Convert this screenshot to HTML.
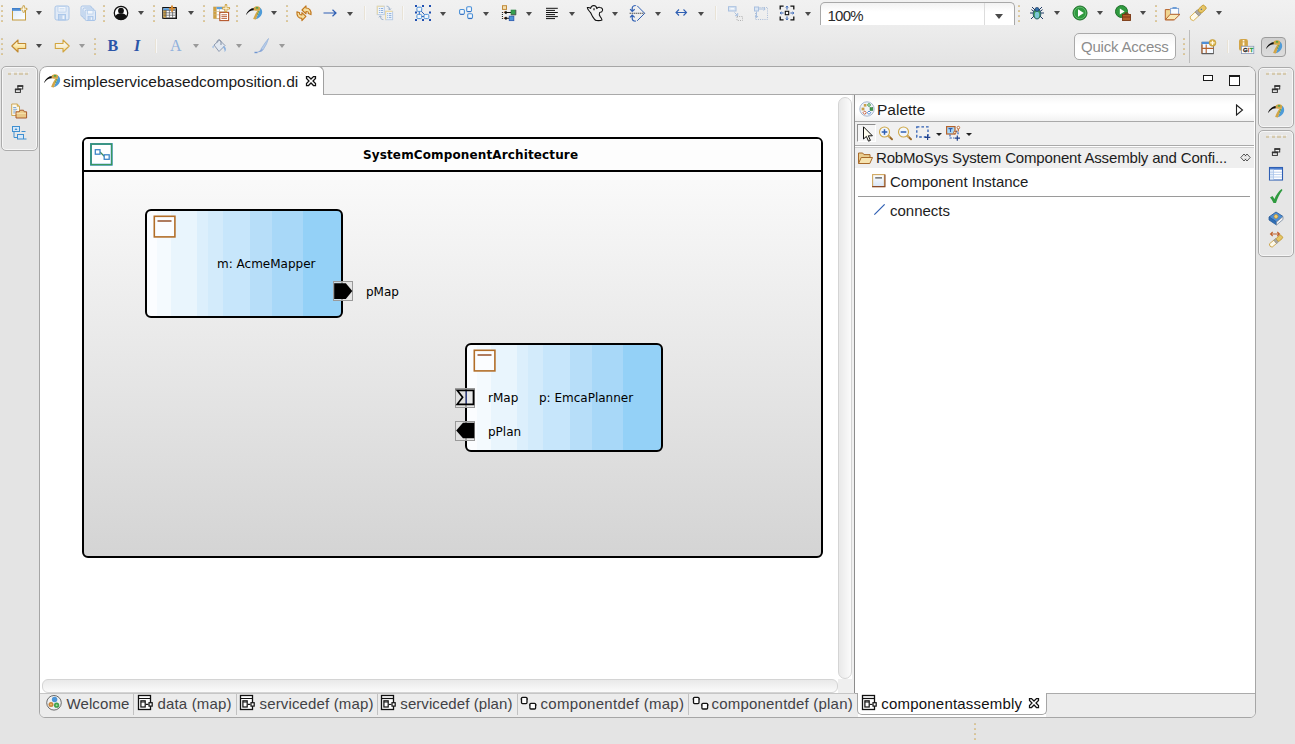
<!DOCTYPE html><html><head><meta charset="utf-8"><title>Papyrus</title><style>
*{box-sizing:border-box;margin:0;padding:0}
html,body{width:1295px;height:744px;overflow:hidden}
body{position:relative;background:#e4e4e4;font-family:"Liberation Sans",sans-serif;font-size:15px;color:#1c1c1c}
.abs{position:absolute}
.ic{position:absolute;overflow:visible}
#tb{position:absolute;left:0;top:0;width:1295px;height:64px;background:linear-gradient(#f1f1f1,#ececec 45%,#e4e4e4)}
.dd{position:absolute;width:0;height:0;border-left:3.5px solid transparent;border-right:3.5px solid transparent;border-top:4.5px solid #4a4a4a}
.hd{position:absolute;width:2px;height:17.5px;opacity:.75;background:repeating-linear-gradient(#bdbdbd 0,#dcbc74 1.2px,#dcbc74 2.1px,transparent 2.1px,transparent 5px)}
.sp{position:absolute;width:2px;border-left:1px solid #e9e3d6;border-right:1px solid #f7f7f7}
.t{position:absolute;white-space:nowrap;line-height:1}
.trim{position:absolute;background:#e6e6e6;border:1px solid #ababab;border-radius:5px;box-shadow:inset 0 0 0 1px #f6f6f6}
.dots{position:absolute;height:2px;width:21px;background:repeating-linear-gradient(90deg,#d2c4a2 0,#d2c4a2 3.2px,transparent 3.2px,transparent 5.7px);border-top:1px solid rgba(255,255,255,.6);box-sizing:content-box;opacity:.8}
</style></head><body>
<div id="tb">
<i class="hd" style="left:1px;top:4.5px"></i>
<svg class="ic" style="left:11px;top:5px" width="16" height="16" viewBox="0 0 16 16" ><defs><linearGradient id="gnw" x1="0" y1="0" x2="1" y2="1"><stop offset="0" stop-color="#dcecfb"/><stop offset="1" stop-color="#ffffff"/></linearGradient></defs><rect x="1.500" y="3.500" width="13" height="11.500" fill="url(#gnw)" stroke="#c49a3a" stroke-width="1"/><rect x="1" y="3" width="9" height="2.800" fill="#3f7fcb"/><rect x="1.500" y="4.600" width="8.500" height="1.200" fill="#6fa4dc"/><path d="M12.700 1.600v5M10.200 4.100h5" stroke="#c49a3a" stroke-width="2.500" stroke-linecap="round"/><path d="M12.700 1.900v4.400M10.500 4.100h4.400" stroke="#fffdf2" stroke-width="1.100" stroke-linecap="round"/></svg>
<i class="dd" style="left:35.5px;top:11px;border-top-color:#4a4a4a"></i>
<svg class="ic" style="left:54px;top:5px" width="16" height="16" viewBox="0 0 16 16" ><rect x="1" y="1" width="14" height="14" rx="1.800" fill="#e0eaf7" stroke="#a9c4e6" stroke-width="1"/><rect x="4" y="1.500" width="8" height="5.500" rx=".6" fill="#f3f7fc" stroke="#b4cdeb" stroke-width=".8"/><path d="M5.500 3.500h5M5.500 5h5" stroke="#c9dbf0" stroke-width=".8"/><rect x="4.500" y="9.500" width="7" height="5.500" fill="#c0d4ee" stroke="#a4c2e8" stroke-width=".8"/><rect x="8.500" y="10.500" width="1.800" height="3.500" fill="#eef4fb"/></svg>
<svg class="ic" style="left:80px;top:5px" width="16" height="16" viewBox="0 0 16 16" ><rect x="1" y="1" width="10.500" height="10.500" rx="1.500" fill="#e4edf8" stroke="#a9c4e6" stroke-width="1"/><rect x="3" y="3" width="10.500" height="10.500" rx="1.500" fill="#e4edf8" stroke="#a9c4e6" stroke-width="1"/><rect x="5" y="5" width="10.500" height="10.500" rx="1.500" fill="#e0eaf7" stroke="#a9c4e6" stroke-width="1"/><rect x="7.500" y="5.500" width="5.500" height="3.500" fill="#f3f7fc" stroke="#b4cdeb" stroke-width=".7"/><rect x="8" y="11.500" width="5" height="4" fill="#c0d4ee" stroke="#a4c2e8" stroke-width=".7"/><rect x="10.800" y="12.300" width="1.300" height="2.500" fill="#eef4fb"/></svg>
<i class="hd" style="left:103px;top:4.5px"></i>
<svg class="ic" style="left:113px;top:5px" width="16" height="16" viewBox="0 0 16 16" ><circle cx="8" cy="8" r="6.700" fill="#fff" stroke="#111" stroke-width="1.300"/><circle cx="8" cy="5.700" r="2.900" fill="#111"/><path d="M2.300 11.600 C3.200 8.800 5.500 8.200 8 8.200 S12.800 8.800 13.700 11.600 C12.300 13.900 10.200 14.800 8 14.800 S3.700 13.900 2.300 11.600Z" fill="#111"/></svg>
<i class="dd" style="left:137.5px;top:11px;border-top-color:#4a4a4a"></i>
<i class="hd" style="left:153px;top:4.5px"></i>
<svg class="ic" style="left:162px;top:5px" width="16" height="16" viewBox="0 0 16 16" ><rect x="1.500" y="3.500" width="13.500" height="10.500" fill="#111"/><rect x="0.800" y="2.600" width="13.300" height="10.600" fill="#fff" stroke="#111" stroke-width="1.200"/><rect x="1.400" y="3.200" width="12.100" height="2" fill="#5aa0e0"/><rect x="1.400" y="5.200" width="2.600" height="7.400" fill="#d0a040"/><path d="M1.400 5.400h12M1.400 7.800h12M1.400 10.200h12M4.200 5.200v7.400M7.400 5.200v7.400M10.600 5.200v7.400" stroke="#555" stroke-width=".7"/><path d="M10 0.400v6.400M6.900 3.600h6.200" stroke="#d88a30" stroke-width="1.900"/></svg>
<i class="dd" style="left:187.5px;top:11px;border-top-color:#4a4a4a"></i>
<i class="hd" style="left:203px;top:4.5px"></i>
<svg class="ic" style="left:213px;top:5px" width="16" height="16" viewBox="0 0 16 16" ><rect x="0.600" y="2" width="11" height="11.500" fill="#fff" stroke="#c8b07a" stroke-width=".8"/><rect x="0.600" y="2" width="3" height="11.500" fill="#d0a040"/><rect x="3.600" y="2" width="8" height="2.200" fill="#5aa0e0"/><path d="M0.600 6.500h11M0.600 9.800h7M6.500 4.200v4" stroke="#c8b890" stroke-width=".7"/><rect x="6.800" y="7.400" width="8.800" height="8.200" fill="#fff" stroke="#b5562b" stroke-width="1.100"/><path d="M8.400 9.800h5.600M8.400 11.600h5.600M8.400 13.400h5.600" stroke="#b5562b" stroke-width=".9"/><path d="M13 0.300v5.800M10.100 3.200h5.800" stroke="#cda040" stroke-width="2.600" stroke-linecap="round"/><path d="M13 0.700v5M10.500 3.200h5" stroke="#fff8dc" stroke-width="1.100" stroke-linecap="round"/></svg>
<i class="hd" style="left:236px;top:4.5px"></i>
<svg class="ic" style="left:246px;top:5px" width="16" height="16" viewBox="0 0 16 16" ><g transform="translate(0 .8)"><path d="M0 8.700 C1.500 5 4.500 2.600 7.900 2.300 L7.900 4.500 C5 4.500 2.500 5.900 0.300 9Z" fill="#0c0c0c"/><path d="M13.600 1.400 C15.800 2.600 16.700 5.400 15.900 8 C14.900 10.900 12.600 12.700 9.800 13.500 C11 10 13 7 13.600 4.400 C14.200 3.400 14.200 2.200 13.600 1.400Z" fill="#4f9bd8"/><path d="M7.700 2 C8.500 0.600 12 0 13.600 1.200 C14.500 2 14.300 3.600 13.500 4.800 L11 5 C9.500 5 8 4.700 7.700 4.500Z" fill="#d2a548"/><path d="M13.700 4.300 C13 7 11 10 9.900 13.600 L7.100 13.300 C8.200 10 9.800 7.300 11.500 4.700Z" fill="#d2a548"/><rect x="9.900" y="1.500" width="2.300" height="1.200" fill="#22a44a"/><rect x="12.200" y="5.600" width="1.100" height="1" fill="#22a44a"/><rect x="11.200" y="7.700" width="1.100" height="1" fill="#22a44a"/></g></svg>
<i class="dd" style="left:270.5px;top:11px;border-top-color:#4a4a4a"></i>
<i class="hd" style="left:286px;top:4.5px"></i>
<svg class="ic" style="left:296px;top:5px" width="16" height="16" viewBox="0 0 16 16" ><path d="M6 5 L10 0.8 L10 3 C13.2 3 15.400 5.200 15 9.600 L12.300 8.600 C12.700 7 12 6.500 10 6.500 L10 8.800 Z" fill="#f6dfa0" stroke="#c0761c" stroke-width="1.1" stroke-linejoin="round"/><path d="M6 5 L10 0.8 L10 3 C13.2 3 15.400 5.200 15 9.600 L12.300 8.600 C12.700 7 12 6.500 10 6.500 L10 8.800 Z" transform="rotate(180 7.95 8.2)" fill="#f6dfa0" stroke="#c0761c" stroke-width="1.1" stroke-linejoin="round"/></svg>
<svg class="ic" style="left:322px;top:5px" width="16" height="16" viewBox="0 0 16 16" ><path d="M1.5 8h12.5M10.5 4.8 L14 8 L10.5 11.2" fill="none" stroke="#2f5fb3" stroke-width="1.2"/></svg>
<i class="dd" style="left:346.5px;top:12px;border-top-color:#4a4a4a"></i>
<i class="sp" style="left:364px;top:6px;height:14px"></i>
<svg class="ic" style="left:377px;top:5px" width="16" height="16" viewBox="0 0 16 16" ><rect x="0.3" y="1.3" width="7" height="8.300" fill="#f0f5fb" stroke="#b9cde6" stroke-width="1"/><path d="M0.3 9.600000000000001V1.3h7" fill="none" stroke="#ead9a8" stroke-width="1.100"/><path d="M1.9000000000000001 3.5h1M3.6999999999999997 3.5h2.400M1.9000000000000001 5.5h1M3.6999999999999997 5.5h2.400M1.9000000000000001 7.5h1M3.6999999999999997 7.5h2.400" stroke="#8fb0dc" stroke-width="1"/><rect x="8.6" y="6.4" width="7" height="8.300" fill="#f0f5fb" stroke="#b9cde6" stroke-width="1"/><path d="M8.6 14.700000000000001V6.4h7" fill="none" stroke="#ead9a8" stroke-width="1.100"/><path d="M10.2 8.600000000000001h1M12.0 8.600000000000001h2.400M10.2 10.600000000000001h1M12.0 10.600000000000001h2.400M10.2 12.600000000000001h1M12.0 12.600000000000001h2.400" stroke="#8fb0dc" stroke-width="1"/><path d="M9.500 1.200 C11.500 1.200 12.600 2.400 12.600 4.600 M11.200 3.500 L12.600 5 L14 3.500 M6.400 14.600 C4.400 14.600 3.300 13.400 3.300 11.200 M1.900 12.300 L3.300 10.800 L4.700 12.300" fill="none" stroke="#9ab0cc" stroke-width="1"/></svg>
<i class="sp" style="left:402px;top:6px;height:14px"></i>
<svg class="ic" style="left:415px;top:5px" width="16" height="16" viewBox="0 0 16 16" ><rect x="0" y="0" width="2" height="2" fill="#1f4fb0"/><rect x="7" y="0" width="2" height="2" fill="#1f4fb0"/><rect x="14" y="0" width="2" height="2" fill="#1f4fb0"/><rect x="0" y="6.5" width="2" height="2" fill="#1f4fb0"/><rect x="14" y="6.5" width="2" height="2" fill="#1f4fb0"/><rect x="0" y="14" width="2" height="2" fill="#1f4fb0"/><rect x="7" y="14" width="2" height="2" fill="#1f4fb0"/><rect x="14" y="14" width="2" height="2" fill="#1f4fb0"/><path d="M4.300 4.200 V11.500 H11.400 M4.300 4.200 L11.400 11.500" fill="none" stroke="#2f5fb3" stroke-width="1"/><rect x="1.900" y="2.200" width="4.800" height="4.200" rx="1.200" fill="#f2f6fb" stroke="#4a90d8" stroke-width="1"/><rect x="1.900" y="9.400" width="4.800" height="4.200" rx="1.200" fill="#f2f6fb" stroke="#4a90d8" stroke-width="1"/><rect x="9" y="9.400" width="4.800" height="4.200" rx="1.200" fill="#f2f6fb" stroke="#4a90d8" stroke-width="1"/></svg>
<i class="dd" style="left:439.5px;top:12px;border-top-color:#4a4a4a"></i>
<svg class="ic" style="left:458px;top:5px" width="16" height="16" viewBox="0 0 16 16" ><rect x="1.6" y="4.5" width="4.800" height="4.700" rx="1.100" fill="#f4f7fb" stroke="#4a90d8" stroke-width="1.100"/><path d="M2.2 9.4h3.600" stroke="#2f5fb3" stroke-width=".8"/><rect x="8.7" y="1.8" width="4.800" height="4.700" rx="1.100" fill="#f4f7fb" stroke="#4a90d8" stroke-width="1.100"/><path d="M9.299999999999999 6.7h3.600" stroke="#2f5fb3" stroke-width=".8"/><rect x="9.7" y="8.7" width="4.800" height="4.700" rx="1.100" fill="#f4f7fb" stroke="#4a90d8" stroke-width="1.100"/><path d="M10.299999999999999 13.6h3.600" stroke="#2f5fb3" stroke-width=".8"/></svg>
<i class="dd" style="left:482.5px;top:12px;border-top-color:#4a4a4a"></i>
<svg class="ic" style="left:501px;top:5px" width="16" height="16" viewBox="0 0 16 16" ><rect x="1.500" y="0.700" width="4" height="3.700" fill="#f5e0b0" stroke="#c08a3a" stroke-width="1"/><path d="M1.400 7v7" stroke="#111" stroke-width="1" stroke-dasharray="1 1"/><path d="M4 7.500h6M4 13.300h4.500" stroke="#111" stroke-width="1.100"/><path d="M2.800 7.500l2.300-1.700 1.200 1.700-1.200 1.700zM2.800 13.300l2.300-1.700 1.200 1.700-1.200 1.700z" fill="#111"/><path d="M2.600 7.500l1.500-1.100M2.600 13.300l1.500-1.100" stroke="#d07030" stroke-width=".8"/><rect x="10" y="5" width="4.800" height="4.800" fill="#35a050" stroke="#2a8040" stroke-width=".6"/><path d="M14.800 5v4.800h-4.800" fill="none" stroke="#555" stroke-width=".8"/><rect x="8.300" y="11.200" width="4.500" height="4.400" fill="#4d96d8" stroke="#2f5fb3" stroke-width=".9"/></svg>
<i class="dd" style="left:525.5px;top:12px;border-top-color:#4a4a4a"></i>
<svg class="ic" style="left:544px;top:5px" width="16" height="16" viewBox="0 0 16 16" ><path d="M2 3.300h11.800M2 5.400h9M2 7.500h11.800M2 9.600h9M2 11.600h11.800M2 13.600h9" stroke="#111" stroke-width="1"/></svg>
<i class="dd" style="left:568.5px;top:12px;border-top-color:#4a4a4a"></i>
<svg class="ic" style="left:587px;top:5px" width="16" height="16" viewBox="0 0 16 16" ><path d="M0.300 2.600 C1.500 2.200 2.800 2.700 3.600 3.400 C3.800 2 4.600 0.500 6.800 0.400 C8.600 0.400 9.600 1.800 9.800 3.600 C10.600 2.600 11.800 2.200 13 2.400 C14.600 2.600 15.800 3.600 15.600 5.200 C15.400 6.600 14 7.400 12.600 7.600 C12 9 12.200 10.400 13.200 11.600 C14.200 12.800 15 13.800 15 15 C13.500 15.700 11.500 15.700 9.500 15.500 C8.600 15.400 8 15 7.600 14.400 C6.600 13 5.600 11.600 5 10.400 C4.400 9.200 4 8.200 3.200 7.200 C2.200 6 0.400 4.400 0.300 2.600Z" fill="#f0f0f0" stroke="#111" stroke-width="1.050" stroke-linejoin="round"/><path d="M7 3.200v2" stroke="#111" stroke-width="1.200"/></svg>
<i class="dd" style="left:611.5px;top:12px;border-top-color:#4a4a4a"></i>
<svg class="ic" style="left:629px;top:5px" width="16" height="16" viewBox="0 0 16 16" ><path d="M8.200 0.800 L15.700 8.300 L8.200 15.800" fill="none" stroke="#2f5fb3" stroke-width="1"/><path d="M0.700 8.300h14.500" stroke="#111" stroke-width="1.100" stroke-dasharray="1 1"/><path d="M6.800 0.500 C4.600 0.500 3.200 1.600 3.200 3.400 V6.200 M1.100 4.200 L3.200 6.400 L5.700 4.200 M6.800 16.100 C4.600 16.100 3.200 15 3.200 13.200 V10.400 M1.100 12.400 L3.200 10.200 L5.700 12.400" fill="none" stroke="#2f5fb3" stroke-width="1.200"/></svg>
<i class="dd" style="left:654.5px;top:12px;border-top-color:#4a4a4a"></i>
<svg class="ic" style="left:673px;top:5px" width="16" height="16" viewBox="0 0 16 16" ><path d="M3 7.500h10.500M6 4.500 L3 7.500 L6 10.500M10.500 4.500 L13.500 7.500 L10.500 10.500" fill="none" stroke="#2f5fb3" stroke-width="1.100"/></svg>
<i class="dd" style="left:697.5px;top:12px;border-top-color:#4a4a4a"></i>
<i class="sp" style="left:715px;top:6px;height:14px"></i>
<svg class="ic" style="left:727px;top:5px" width="16" height="16" viewBox="0 0 16 16" ><rect x="1.500" y="1.700" width="7.500" height="4.300" fill="#dbe6f4" stroke="#a9c0df"/><path d="M3.500 3.800h3.500" stroke="#fff" stroke-width="1"/><path d="M7.500 7.500 L10.500 10.500 M10.700 8V10.700H8" fill="none" stroke="#a9c0df" stroke-width="1"/><rect x="10" y="11.500" width="5.500" height="4" fill="none" stroke="#b0b0b0" stroke-width="1" stroke-dasharray="1 1.200"/></svg>
<svg class="ic" style="left:753px;top:5px" width="16" height="16" viewBox="0 0 16 16" ><path d="M6.500 2.500H14.500V14.500H2.500V7" fill="none" stroke="#a9bcd8" stroke-width="1" stroke-dasharray="1 1.200"/><rect x="1.500" y="2" width="4" height="4" fill="#dbe6f4" stroke="#a9c0df"/><path d="M6 4h6M10.500 2.500 L12.200 4 L10.500 5.500M3.500 6.500v6M2 11 L3.500 12.700 L5 11" fill="none" stroke="#a9c0df" stroke-width="1"/></svg>
<svg class="ic" style="left:779px;top:5px" width="16" height="16" viewBox="0 0 16 16" ><path d="M1.200 4.600V1.200h3.400M11.400 1.200H14.800v3.400M14.800 11.400V14.800h-3.400M4.600 14.800H1.200v-3.400" fill="none" stroke="#111" stroke-width="1.300"/><rect x="6.300" y="6.300" width="3.400" height="3.400" fill="#fff" stroke="#111" stroke-width="1.100"/><path d="M8 1.200v3.400M6.900 2.400 L8 1.200 L9.100 2.400M8 14.800v-3.400M6.900 13.600 L8 14.800 L9.100 13.600M1.200 8h3.400M2.400 6.900 L1.200 8 L2.400 9.100M14.800 8h-3.400M13.600 6.900 L14.800 8 L13.600 9.100" fill="none" stroke="#2f5fb3" stroke-width="1"/></svg>
<i class="dd" style="left:804.5px;top:12px;border-top-color:#4a4a4a"></i>
<i class="hd" style="left:1018px;top:4.5px"></i>
<svg class="ic" style="left:1029px;top:5px" width="16" height="16" viewBox="0 0 16 16" ><path d="M3 2 L6 5 M13 2 L10 5 M1 8 H4 M12 8 h3 M2 14 L5 11 M14 14 L11 11 M2.400 4.600 L5 6.500 M13.600 4.600 L11 6.500" stroke="#1f3b66" stroke-width="1"/><ellipse cx="8" cy="9" rx="3.800" ry="5" fill="#3f9a5a" stroke="#1f4f66" stroke-width=".9"/><ellipse cx="8" cy="10" rx="2.200" ry="3.200" fill="#7cc7d8"/><circle cx="8" cy="4.400" r="2" fill="#2f6fa8" stroke="#1f3b66" stroke-width=".7"/></svg>
<i class="dd" style="left:1053.5px;top:11px;border-top-color:#4a4a4a"></i>
<svg class="ic" style="left:1072px;top:5px" width="16" height="16" viewBox="0 0 16 16" ><circle cx="8" cy="8" r="7" fill="#2f9a3f" stroke="#1f6f2a" stroke-width="1"/><circle cx="8" cy="8" r="5.800" fill="none" stroke="#7fd08a" stroke-width=".8" opacity=".7"/><path d="M6 4.200 L11.800 8 L6 11.800Z" fill="#fff"/></svg>
<i class="dd" style="left:1096.5px;top:11px;border-top-color:#4a4a4a"></i>
<svg class="ic" style="left:1115px;top:5px" width="16" height="16" viewBox="0 0 16 16" ><circle cx="6.500" cy="6.500" r="6" fill="#2f9a3f" stroke="#1f6f2a" stroke-width="1"/><path d="M4.800 3.400 L9.600 6.500 L4.800 9.600Z" fill="#fff"/><rect x="7.500" y="9.500" width="8" height="6" fill="#b0602c" stroke="#7a3a14" stroke-width=".9"/><path d="M10 9.500v-1.500h3v1.500" fill="none" stroke="#7a2a12" stroke-width="1"/><path d="M7.500 12h8" stroke="#7a2a12" stroke-width=".8"/></svg>
<i class="dd" style="left:1139.5px;top:11px;border-top-color:#4a4a4a"></i>
<i class="hd" style="left:1155px;top:4.5px"></i>
<svg class="ic" style="left:1164px;top:5px" width="16" height="16" viewBox="0 0 16 16" ><path d="M1.300 4.600 h4.400 l1 1.200 h7.300 v3.400 L9.800 14.800 H1.300Z" fill="#f0d590" stroke="#b5622b" stroke-width="1" stroke-linejoin="round"/><rect x="6.600" y="3.400" width="8" height="6.400" fill="#f8fbff" stroke="#7f9fd0" stroke-width=".9"/><rect x="8.300" y="2" width="4.600" height="2" rx=".8" fill="#6f9fd8"/><path d="M1.300 14.800 L6.200 9.300 H16 L10.400 14.800Z" fill="#f8e8b8" stroke="#b5622b" stroke-width="1" stroke-linejoin="round"/></svg>
<svg class="ic" style="left:1190px;top:5px" width="16" height="16" viewBox="0 0 16 16" ><g transform="rotate(-43 7.500 8.300)"><path d="M-0.400 5.800 H7 V11 H-0.400 L-1.600 8.400Z" fill="#fdf9ea" stroke="#d8b050" stroke-width=".9" stroke-linejoin="round"/><rect x="6.600" y="5.700" width="3.200" height="5.400" fill="#aaa6a0" stroke="#8a8680" stroke-width=".7"/><rect x="9.800" y="5.900" width="8" height="5" rx="1.600" fill="#e6c566" stroke="#c09830" stroke-width=".9"/><rect x="12.500" y="7.400" width="1.200" height="1.200" fill="#2f5fb3"/></g></svg>
<i class="dd" style="left:1215.5px;top:11px;border-top-color:#4a4a4a"></i>
<div class="abs" style="left:820px;top:2px;width:195px;height:23px;border:1px solid #a8a8a8;border-bottom:none;border-radius:5px 5px 0 0;background:linear-gradient(#f2f2f2,#ffffff 40%);"></div>
<i class="abs" style="left:984px;top:3px;width:1px;height:22px;background:#dcdcdc"></i>
<span class="t" style="left:827.500px;top:8px;font-size:15px;letter-spacing:-.75px;color:#2a2a2a">100%</span>
<i class="dd" style="left:994.5px;top:14px;border-left-width:4px;border-right-width:4px;border-top-width:5px"></i>
<i class="hd" style="left:1px;top:37.5px"></i>
<svg class="ic" style="left:11px;top:38px" width="16" height="16" viewBox="0 0 16 16" ><defs><linearGradient id="gbk" x1="0" y1="0" x2="0" y2="1"><stop offset="0" stop-color="#fffbe6"/><stop offset=".5" stop-color="#fbeab0"/><stop offset="1" stop-color="#efc45a"/></linearGradient></defs><path d="M0.800 8 L7 2 V5.500 H14.700 V10.500 H7 V14Z" fill="url(#gbk)" stroke="#c28a30" stroke-width="1.100" stroke-linejoin="round"/></svg>
<i class="dd" style="left:35.5px;top:44px;border-top-color:#4a4a4a"></i>
<svg class="ic" style="left:54px;top:38px" width="16" height="16" viewBox="0 0 16 16" ><defs><linearGradient id="gfw" x1="0" y1="0" x2="0" y2="1"><stop offset="0" stop-color="#fffdf0"/><stop offset=".5" stop-color="#f6f0dc"/><stop offset="1" stop-color="#f3d98a"/></linearGradient></defs><path d="M15.200 8 L9 2 V5.500 H1.300 V10.500 H9 V14Z" fill="url(#gfw)" stroke="#d2a640" stroke-width="1.100" stroke-linejoin="round"/></svg>
<i class="dd" style="left:78.5px;top:44px;border-top-color:#9a9a9a"></i>
<i class="hd" style="left:94px;top:37.5px"></i>
<i class="sp" style="left:155px;top:39px;height:14px"></i>
<i class="dd" style="left:192.5px;top:44px;border-top-color:#9a9a9a"></i>
<svg class="ic" style="left:211px;top:38px" width="16" height="16" viewBox="0 0 16 16" ><path d="M3 7 L8.500 2 L14 7.500 L8 13.500Z" fill="#e2e8f0" stroke="#8f9bb0" stroke-width="1" stroke-linejoin="round"/><path d="M6 4.500 C6 1 10 1 10 4.500 V7" fill="none" stroke="#808da2" stroke-width="1"/><path d="M3 7 L1 9 L2.500 10.500 Z" fill="#9cbbe4"/><path d="M12.500 8 C15.500 9 15.500 13 13.500 14 C14 12 13 10.500 12 9.500Z" fill="#8ab0e0"/></svg>
<i class="dd" style="left:235.5px;top:44px;border-top-color:#9a9a9a"></i>
<svg class="ic" style="left:254px;top:38px" width="16" height="16" viewBox="0 0 16 16" ><path d="M14.500 0.500 L11 5 L7 11 L9 12 L12.500 6Z" fill="#b8cdea" stroke="#94b0d8" stroke-width=".7"/><path d="M7 11 C6 12.500 5 13.500 3 14 C5 14.500 8 14 9 12Z" fill="#8aa8d8"/><path d="M0.500 14.500h3" stroke="#6f95d0" stroke-width="1.400"/></svg>
<i class="dd" style="left:278.5px;top:44px;border-top-color:#9a9a9a"></i>
<span class="t" style="left:107.500px;top:37.800px;font-family:'Liberation Serif',serif;font-weight:bold;font-size:16px;color:#2b56a8">B</span>
<span class="t" style="left:134px;top:37.800px;font-family:'Liberation Serif',serif;font-weight:bold;font-style:italic;font-size:16px;color:#2b56a8">I</span>
<span class="t" style="left:170px;top:37.800px;font-family:'Liberation Serif',serif;font-size:16px;color:#8fb0dc">A</span>
<div class="abs" style="left:1074px;top:33px;width:102px;height:27px;border:1px solid #a9a9a9;border-radius:5px;background:linear-gradient(#f4f4f4,#ffffff 50%)"></div>
<span class="t" style="left:1081px;top:39px;font-size:15px;color:#8c8c8c;letter-spacing:-0.2px">Quick Access</span>
<i class="hd" style="left:1183px;top:37.5px"></i>
<i class="abs" style="left:1189px;top:30px;width:1px;height:33px;background:#bdbdbd"></i>
<svg class="ic" style="left:1200.5px;top:39px" width="16" height="16" viewBox="0 0 16 16" ><rect x="0.900" y="3.300" width="11.600" height="11.300" fill="#f4f9ff" stroke="#6a6a6a" stroke-width=".9"/><rect x="0.900" y="2.800" width="11.600" height="2.200" fill="#4f8fd8"/><path d="M1 5.500V14.500M5.200 5.500v9M1.400 9.400h11" stroke="#b5622b" stroke-width="1.100"/><path d="M0.900 14.700h11.600" stroke="#555" stroke-width="1"/><circle cx="11.500" cy="3.900" r="3.400" fill="#d8b048" stroke="#c09830" stroke-width=".6"/><path d="M11.500 1.700v4.400M9.300 3.900h4.400" stroke="#fffbe8" stroke-width="1.300"/></svg>
<i class="sp" style="left:1227px;top:40px;height:13px"></i>
<svg class="ic" style="left:1238px;top:38px" width="17" height="17" viewBox="0 0 17 17"><rect x="1" y="0.900" width="8.900" height="11.900" rx="2.200" fill="#d2a548"/><rect x="4.700" y="2" width="1.700" height="1.500" fill="#fff8e8"/><rect x="4.700" y="4.300" width="1.700" height="3.200" fill="#fff8e8"/><rect x="3.400" y="8.300" width="12.400" height="7.300" fill="#fff" stroke="#8a9ab8" stroke-width=".8"/><text x="4.900" y="14" font-family="Liberation Sans,sans-serif" font-weight="bold" font-size="5.800" letter-spacing=".3" stroke-width=".3"><tspan fill="#222" stroke="#222">G</tspan><tspan fill="#c0502a" stroke="#c0502a">I</tspan><tspan fill="#2f9a3f" stroke="#2f9a3f">T</tspan></text></svg>
<div class="abs" style="left:1261px;top:37px;width:25px;height:20px;border:1px solid #9c9c9c;border-radius:4px;background:linear-gradient(#cfcfcf,#dddddd)"></div>
<svg class="ic" style="left:1265.5px;top:39px" width="16" height="16" viewBox="0 0 16 16" ><g transform="translate(0 .8)"><path d="M0 8.700 C1.500 5 4.500 2.600 7.900 2.300 L7.900 4.500 C5 4.500 2.500 5.900 0.300 9Z" fill="#0c0c0c"/><path d="M13.600 1.400 C15.800 2.600 16.700 5.400 15.900 8 C14.900 10.900 12.600 12.700 9.800 13.500 C11 10 13 7 13.600 4.400 C14.200 3.400 14.200 2.200 13.600 1.400Z" fill="#4f9bd8"/><path d="M7.700 2 C8.500 0.600 12 0 13.600 1.200 C14.500 2 14.300 3.600 13.500 4.800 L11 5 C9.500 5 8 4.700 7.700 4.500Z" fill="#d2a548"/><path d="M13.700 4.300 C13 7 11 10 9.900 13.600 L7.100 13.300 C8.200 10 9.800 7.300 11.500 4.700Z" fill="#d2a548"/><rect x="9.900" y="1.500" width="2.300" height="1.200" fill="#22a44a"/><rect x="12.200" y="5.600" width="1.100" height="1" fill="#22a44a"/><rect x="11.200" y="7.700" width="1.100" height="1" fill="#22a44a"/></g></svg>
</div>
<div class="trim" style="left:1px;top:66px;width:37px;height:84.500px;border-radius:5px"></div>
<i class="dots" style="left:8px;top:71.500px"></i>
<svg class="ic" style="left:10.5px;top:81px" width="16" height="16" viewBox="0 0 16 16" ><rect x="6.900" y="4.800" width="4.800" height="3.200" fill="#f4f4f4" stroke="#333" stroke-width="1"/><path d="M6.400 5.100h5.800" stroke="#333" stroke-width="1.600"/><rect x="4.400" y="8.200" width="5" height="3.200" fill="#f4f4f4" stroke="#333" stroke-width="1"/><path d="M3.900 8.500h6" stroke="#333" stroke-width="1.600"/></svg>
<svg class="ic" style="left:10.5px;top:102.5px" width="16" height="16" viewBox="0 0 16 16" ><path d="M0.700 1h5.500l2.300 2.300v9.200h-7.800z" fill="#fdf8e8" stroke="#c9a04a" stroke-width=".9"/><path d="M6.200 1v2.300h2.300" fill="#e8c060" stroke="#c9a04a" stroke-width=".7"/><path d="M2.200 4.500h3M2.200 6.300h4M2.200 8.100h3M2.200 9.900h2" stroke="#6f9fd8" stroke-width=".9"/><path d="M5 8.800h3.200l1-1.600h3.300l.8 1.600h2.300v6.200h-10.600z" fill="#e9c888" stroke="#a85a2a" stroke-width="1" stroke-linejoin="round"/><path d="M5.600 10.300h9.400" stroke="#f8e4b0" stroke-width="1"/></svg>
<svg class="ic" style="left:11px;top:125px" width="16" height="16" viewBox="0 0 16 16" ><rect x="1.500" y="1.500" width="7" height="5" fill="#d7e8f8" stroke="#3f8fd0" stroke-width="1"/><path d="M3.500 5 L5 3 L6.500 5Z" fill="#3f8fd0"/><path d="M3 6.500v6h3" fill="none" stroke="#3f8fd0" stroke-width="1"/><rect x="6.500" y="9.500" width="6" height="4.500" fill="#d7e8f8" stroke="#3f8fd0" stroke-width="1"/><path d="M10.500 6.500h4M13 14h2.500" stroke="#3f8fd0" stroke-width="1.200"/></svg>
<div class="trim" style="left:1258px;top:67px;width:36px;height:61px;border-radius:5px"></div>
<div class="trim" style="left:1258px;top:130px;width:36px;height:127px;border-radius:5px"></div>
<i class="dots" style="left:1266px;top:72px"></i>
<svg class="ic" style="left:1268px;top:81px" width="16" height="16" viewBox="0 0 16 16" ><rect x="6.900" y="4.800" width="4.800" height="3.200" fill="#f4f4f4" stroke="#333" stroke-width="1"/><path d="M6.400 5.100h5.800" stroke="#333" stroke-width="1.600"/><rect x="4.400" y="8.200" width="5" height="3.200" fill="#f4f4f4" stroke="#333" stroke-width="1"/><path d="M3.900 8.500h6" stroke="#333" stroke-width="1.600"/></svg>
<svg class="ic" style="left:1268px;top:102.5px" width="16" height="16" viewBox="0 0 16 16" ><g transform="translate(0 .8)"><path d="M0 8.700 C1.500 5 4.500 2.600 7.900 2.300 L7.900 4.500 C5 4.500 2.500 5.900 0.300 9Z" fill="#0c0c0c"/><path d="M13.600 1.400 C15.800 2.600 16.700 5.400 15.900 8 C14.900 10.900 12.600 12.700 9.800 13.500 C11 10 13 7 13.600 4.400 C14.200 3.400 14.200 2.200 13.600 1.400Z" fill="#4f9bd8"/><path d="M7.700 2 C8.500 0.600 12 0 13.600 1.200 C14.500 2 14.300 3.600 13.500 4.800 L11 5 C9.500 5 8 4.700 7.700 4.500Z" fill="#d2a548"/><path d="M13.700 4.300 C13 7 11 10 9.900 13.600 L7.100 13.300 C8.200 10 9.800 7.300 11.500 4.700Z" fill="#d2a548"/><rect x="9.900" y="1.500" width="2.300" height="1.200" fill="#22a44a"/><rect x="12.200" y="5.600" width="1.100" height="1" fill="#22a44a"/><rect x="11.200" y="7.700" width="1.100" height="1" fill="#22a44a"/></g></svg>
<i class="dots" style="left:1266px;top:135px"></i>
<svg class="ic" style="left:1268px;top:144px" width="16" height="16" viewBox="0 0 16 16" ><rect x="6.900" y="4.800" width="4.800" height="3.200" fill="#f4f4f4" stroke="#333" stroke-width="1"/><path d="M6.400 5.100h5.800" stroke="#333" stroke-width="1.600"/><rect x="4.400" y="8.200" width="5" height="3.200" fill="#f4f4f4" stroke="#333" stroke-width="1"/><path d="M3.900 8.500h6" stroke="#333" stroke-width="1.600"/></svg>
<svg class="ic" style="left:1268px;top:165.5px" width="16" height="16" viewBox="0 0 16 16" ><rect x="1.500" y="1.500" width="13" height="12.500" fill="#fff" stroke="#2f5fb3" stroke-width="1.100"/><rect x="2" y="2" width="12" height="1.700" fill="#4d7fd0"/><rect x="2" y="3.700" width="3.400" height="9.800" fill="#e4eefa"/><path d="M2 6.200h12M2 8.600h12M2 11h12" stroke="#a9c4ea" stroke-width=".8"/><path d="M5.500 3.700v9.800" stroke="#a9c4ea" stroke-width=".8"/></svg>
<svg class="ic" style="left:1268px;top:187.5px" width="16" height="16" viewBox="0 0 16 16" ><path d="M2 9.500 L4.500 8 L6.500 11 C8 7 10.500 3.500 13.500 1 L14.500 2 C11.500 6 9.500 10 8 15 L5.500 15 C4.500 13 3.500 11 2 9.500Z" fill="#2f9a3f"/></svg>
<svg class="ic" style="left:1268px;top:210px" width="16" height="16" viewBox="0 0 16 16" ><path d="M1 7 L8 2 L15 6.500 L8.500 12Z" fill="#4d8fd6" stroke="#2f5f9a" stroke-width=".9" stroke-linejoin="round"/><path d="M1 7 V10 L8.500 15 V12Z" fill="#2f6fb8" stroke="#2f5f9a" stroke-width=".8" stroke-linejoin="round"/><path d="M8.500 12 L15 6.500 V9.500 L8.500 15Z" fill="#f4f4f4" stroke="#7a8aa0" stroke-width=".8" stroke-linejoin="round"/><circle cx="8" cy="6.500" r="2" fill="#f0d070" stroke="#b98a3a" stroke-width=".7"/></svg>
<svg class="ic" style="left:1268px;top:231px" width="16" height="16" viewBox="0 0 16 16" ><g transform="translate(1.500 3.500) scale(.82) rotate(-40 7.500 8.300)"><path d="M-0.400 5.800 H7 V11 H-0.400 L-1.600 8.400Z" fill="#fdf9ea" stroke="#c9a040" stroke-width="1" stroke-linejoin="round"/><rect x="6.600" y="5.700" width="3.200" height="5.400" fill="#aaa6a0" stroke="#8a8680" stroke-width=".7"/><rect x="9.800" y="5.900" width="7.500" height="5" rx="1.600" fill="#e6c566" stroke="#c09830" stroke-width="1"/></g><path d="M2.500 3h9M4.700 1 L2.500 3 L4.700 5M9.300 1 L11.500 3 L9.300 5" fill="none" stroke="#c0602a" stroke-width="1.100"/></svg>
<div class="abs" style="left:39px;top:66px;width:1217px;height:652px;border:1px solid #a6a6a6;border-radius:8px 8px 6px 6px;background:#fff;overflow:hidden">
<div class="abs" style="left:0;top:0;width:1215px;height:28px;background:#efefef;border-bottom:1px solid #a9a9a9"></div>
<div class="abs" style="left:-1px;top:-1px;width:285px;height:29px;background:#fff;border:1px solid #a0a0a0;border-bottom:none;border-radius:8px 6px 0 0"></div>
<svg class="ic" style="left:4px;top:6px" width="16" height="16" viewBox="0 0 16 16" ><g transform="translate(0 .8)"><path d="M0 8.700 C1.500 5 4.500 2.600 7.900 2.300 L7.900 4.500 C5 4.500 2.500 5.900 0.300 9Z" fill="#0c0c0c"/><path d="M13.600 1.400 C15.800 2.600 16.700 5.400 15.900 8 C14.900 10.900 12.600 12.700 9.800 13.500 C11 10 13 7 13.600 4.400 C14.200 3.400 14.200 2.200 13.600 1.400Z" fill="#4f9bd8"/><path d="M7.700 2 C8.500 0.600 12 0 13.600 1.200 C14.500 2 14.300 3.600 13.500 4.800 L11 5 C9.500 5 8 4.700 7.700 4.500Z" fill="#d2a548"/><path d="M13.700 4.300 C13 7 11 10 9.900 13.600 L7.100 13.300 C8.200 10 9.800 7.300 11.500 4.700Z" fill="#d2a548"/><rect x="9.900" y="1.500" width="2.300" height="1.200" fill="#22a44a"/><rect x="12.200" y="5.600" width="1.100" height="1" fill="#22a44a"/><rect x="11.200" y="7.700" width="1.100" height="1" fill="#22a44a"/></g></svg>
<span class="t" style="left:23px;top:7px;font-size:15.500px;color:#1a1a1a">simpleservicebasedcomposition.di</span>
<svg class="ic" style="left:265px;top:8px" width="12" height="12" viewBox="0 0 12 12"><path d="M1.500 1.500 L3.500 1.500 L6 4 L8.500 1.500 L10.500 1.500 L10.500 3.500 L8 6 L10.500 8.500 L10.500 10.500 L8.500 10.500 L6 8 L3.500 10.500 L1.500 10.500 L1.500 8.500 L4 6 L1.500 3.500Z" fill="#fff" stroke="#111" stroke-width="1.250"/></svg>
<div class="abs" style="left:1163px;top:8px;width:10px;height:5.500px;border:1.400px solid #1a1a1a;background:#fff"></div>
<div class="abs" style="left:1189px;top:8px;width:11px;height:11px;border:1.400px solid #1a1a1a;border-top-width:2.400px;background:#fff"></div>
<div id="cv" class="abs" style="left:0px;top:29px;width:798px;height:583px;background:#fff">
<div class="abs" style="left:42px;top:41px;width:741px;height:421px;border:2px solid #000;border-radius:6px;background:linear-gradient(#fafafa 8%,#d4d4d4);overflow:hidden">
<div class="abs" style="left:0;top:0;width:737px;height:33px;background:#fdfdfd;border-bottom:2px solid #000"></div>
<span class="t" style="left:279px;top:9.8px;font-family:'DejaVu Sans',sans-serif;font-weight:bold;font-size:12px;letter-spacing:.13px;color:#000">SystemComponentArchitecture</span>
<svg class="ic" style="left:6px;top:4px" width="24" height="24" viewBox="0 0 24 24"><rect x="1" y="1" width="20.700" height="20.700" fill="#fff" stroke="#3f8fd0" stroke-width="2"/><rect x="1" y="1" width="20.700" height="20.700" fill="none" stroke="#3a9a4a" stroke-width="1.100"/><path d="M10 9 L14.500 13.500" stroke="#3a8a5a" stroke-width="1.200"/><rect x="5.300" y="6.700" width="4.700" height="4.500" fill="#fff" stroke="#3f86c8" stroke-width="1.300"/><rect x="14.200" y="11.800" width="5" height="4.500" fill="#fff" stroke="#3f86c8" stroke-width="1.300"/></svg>
</div>
<div class="abs" style="left:105px;top:113px;width:198px;height:109px;border:2px solid #000;border-radius:6px;background:linear-gradient(90deg,#fbfdff 0px,#fbfdff 10px,#f4fafe 10px,#f4fafe 24px,#e9f5fd 24px,#e9f5fd 50px,#dceffc 50px,#dceffc 61px,#d3ebfb 61px,#d3ebfb 76px,#c7e6fb 76px,#c7e6fb 103px,#b7def9 103px,#b7def9 125px,#a8d8f8 125px,#a8d8f8 156px,#94d1f7 156px,#94d1f7 194px)"><svg class="ic" style="left:6px;top:4px" width="24" height="24" viewBox="0 0 24 24"><rect x="1.300" y="1.300" width="20.600" height="20.600" fill="#fbfdff" stroke="#b26e28" stroke-width="1.600"/><path d="M4.500 6h14" stroke="#96502a" stroke-width="1.500"/></svg></div>
<span class="t" style="left:177px;top:162px;font-family:'DejaVu Sans',sans-serif;font-size:12px;color:#000">m: AcmeMapper</span>
<svg class="ic" style="left:293px;top:185px" width="20" height="20" viewBox="0 0 20 20"><rect x=".5" y=".5" width="19" height="19" fill="#e2e2e2" fill-opacity=".75" stroke="#9a9a9a" stroke-width="1"/><path d="M1.200 2.200 H12.800 L19.300 10 L12.800 18 H1.200Z" fill="#000"/></svg>
<span class="t" style="left:326px;top:190px;font-family:'DejaVu Sans',sans-serif;font-size:12px;color:#000">pMap</span>
<div class="abs" style="left:425px;top:247px;width:198px;height:109px;border:2px solid #000;border-radius:6px;background:linear-gradient(90deg,#fbfdff 0px,#fbfdff 10px,#f4fafe 10px,#f4fafe 24px,#e9f5fd 24px,#e9f5fd 50px,#dceffc 50px,#dceffc 61px,#d3ebfb 61px,#d3ebfb 76px,#c7e6fb 76px,#c7e6fb 103px,#b7def9 103px,#b7def9 125px,#a8d8f8 125px,#a8d8f8 156px,#94d1f7 156px,#94d1f7 194px)"><svg class="ic" style="left:6px;top:4px" width="24" height="24" viewBox="0 0 24 24"><rect x="1.300" y="1.300" width="20.600" height="20.600" fill="#fbfdff" stroke="#b26e28" stroke-width="1.600"/><path d="M4.500 6h14" stroke="#96502a" stroke-width="1.500"/></svg></div>
<span class="t" style="left:448px;top:296px;font-family:'DejaVu Sans',sans-serif;font-size:12px;color:#000">rMap</span>
<span class="t" style="left:499px;top:296px;font-family:'DejaVu Sans',sans-serif;font-size:12px;color:#000">p: EmcaPlanner</span>
<span class="t" style="left:448px;top:330px;font-family:'DejaVu Sans',sans-serif;font-size:12px;color:#000">pPlan</span>
<svg class="ic" style="left:415px;top:292px" width="20" height="20" viewBox="0 0 20 20"><rect x=".5" y=".5" width="19" height="19" fill="#e2e2e2" fill-opacity=".75" stroke="#9a9a9a" stroke-width="1"/><path d="M11.200 2v15" stroke="#1a2a7a" stroke-width="1.200"/><path d="M2.200 2.300 H18.500 V16.300 H2.200 L7.600 9.300Z" fill="none" stroke="#000" stroke-width="1.700"/></svg>
<svg class="ic" style="left:415px;top:325px" width="20" height="20" viewBox="0 0 20 20"><rect x=".5" y=".5" width="19" height="19" fill="#e2e2e2" fill-opacity=".75" stroke="#9a9a9a" stroke-width="1"/><path d="M19.300 1.800 H8 L1.200 9.500 L8 17.200 H19.300Z" fill="#000"/></svg>
</div>
<div class="abs" style="left:798px;top:30px;width:14px;height:582px;border:1px solid #d4d4d4;border-radius:7px;background:linear-gradient(90deg,#e9e9e9,#fbfbfb)"></div>
<div class="abs" style="left:2px;top:612px;width:796px;height:14px;border:1px solid #d4d4d4;border-radius:6px;background:linear-gradient(#e9e9e9,#fbfbfb)"></div>
<div class="abs" style="left:798px;top:612px;width:17px;height:14px;background:#efefef"></div>
<div class="abs" style="left:812px;top:28px;width:3px;height:598px;background:#f0f0f0;border-right:1px solid #8c8c8c"></div>
<div id="pal" class="abs" style="left:815px;top:28px;width:399px;height:598px;background:#fff">
<div class="abs" style="left:0;top:0;width:399px;height:27px;background:linear-gradient(#f4f4f4,#ffffff 35%,#ffffff 65%,#f2f2f2);border-bottom:1px solid #a9a9a9"></div>
<svg class="ic" style="left:3.5px;top:5.5px" width="16" height="16" viewBox="0 0 16 16" ><circle cx="8" cy="8" r="7.200" fill="#f0f3f8" stroke="#a8b8d0" stroke-width="1"/><rect x="4.800" y="3" width="2.600" height="2.600" fill="#c9a04a"/><rect x="2.600" y="6.600" width="2.800" height="2.800" fill="#c9a04a"/><circle cx="10" cy="4" r="1.300" fill="#fff" stroke="#3f9a4a" stroke-width="1"/><rect x="11" y="6.700" width="2.800" height="2.800" fill="#3f9a4a" stroke="#2a6f33" stroke-width=".5"/><path d="M5.700 10 l1.700 1.700 -1.700 1.700 -1.700 -1.700z" fill="#fff" stroke="#c0502a" stroke-width=".9"/><path d="M10 10 l1.700 1.700 -1.700 1.700 -1.700 -1.700z" fill="#fff" stroke="#3f7fd0" stroke-width=".9"/></svg>
<span class="t" style="left:22px;top:7px;font-size:15.500px">Palette</span>
<svg class="ic" style="left:380px;top:9px" width="9" height="12" viewBox="0 0 9 12"><path d="M1.500 1 L7.500 6 L1.500 11Z" fill="#fff" stroke="#222" stroke-width="1.100"/></svg>
<div class="abs" style="left:0;top:27px;width:399px;height:24px;background:#f0f0f0;border-bottom:1px solid #a9a9a9"></div>
<div class="abs" style="left:2px;top:29px;width:19px;height:18px;background:#f5f5f5;border:1px solid #8f8f8f;border-right-color:#fff;border-bottom-color:#fff"></div>
<svg class="ic" style="left:5px;top:31px" width="16" height="16" viewBox="0 0 16 16" ><path d="M3.500 0.800 V13 L6.400 10.400 L8.500 15.200 L10.400 14.400 L8.300 9.800 L12.400 9.800Z" fill="#fffef0" stroke="#111" stroke-width="1" stroke-linejoin="round"/></svg>
<svg class="ic" style="left:23px;top:31px" width="16" height="16" viewBox="0 0 16 16" ><path d="M10.300 9.800 L14 13.300" stroke="#9a6a2a" stroke-width="2" stroke-linecap="round"/><path d="M10 9.500 L12 11.400" stroke="#d8b060" stroke-width="1.600"/><circle cx="6.500" cy="6" r="5" fill="#f1f6fc" stroke="#cfa848" stroke-width="1.100"/><path d="M6.500 3.200v5.600M3.700 6h5.600" stroke="#2f5fb3" stroke-width="1.500"/></svg>
<svg class="ic" style="left:42px;top:31px" width="16" height="16" viewBox="0 0 16 16" ><path d="M10.300 9.800 L14 13.300" stroke="#9a6a2a" stroke-width="2" stroke-linecap="round"/><path d="M10 9.500 L12 11.400" stroke="#d8b060" stroke-width="1.600"/><circle cx="6.500" cy="6" r="5" fill="#f1f6fc" stroke="#cfa848" stroke-width="1.100"/><path d="M3.700 6h5.600" stroke="#2f5fb3" stroke-width="1.500"/></svg>
<svg class="ic" style="left:61px;top:31px" width="16" height="16" viewBox="0 0 16 16" ><path d="M0.800 0.800h11.200v10.200h-11.200z" fill="none" stroke="#2f5fb3" stroke-width="1.300" stroke-dasharray="2.600 2"/><path d="M11.600 8.600v5.400M8.900 11.300h5.400" stroke="#1f3f8a" stroke-width="1.200"/></svg>
<svg class="ic" style="left:91px;top:31px" width="16" height="16" viewBox="0 0 16 16" ><rect x="0.600" y="0.600" width="8.400" height="7.400" fill="#a8d8f8" stroke="#b5622b" stroke-width="1.200"/><path d="M2.500 2.600h4M4.500 2.600v3.400" stroke="#2f5fb3" stroke-width="1.100"/><path d="M4 8.500v3.500h4M9.500 5.500h2.500v3" fill="none" stroke="#2f5fb3" stroke-width="1.200" stroke-dasharray="2 1.300"/><circle cx="12.400" cy="1.600" r="1.300" fill="#fff" stroke="#b5622b" stroke-width=".9"/><circle cx="8.800" cy="6.500" r="1.300" fill="#f4d8b0" stroke="#b5622b" stroke-width=".9"/><path d="M12.400 2.900v2.600M9.800 5.700l1.700-1.700" stroke="#b5622b" stroke-width=".9"/><path d="M11.300 9.400v5.400M8.600 12.100h5.400" stroke="#1f3f8a" stroke-width="1.200"/></svg>
<i class="dd" style="left:80.5px;top:38px;border-left-width:3px;border-right-width:3px;border-top:3.500px solid #222"></i>
<i class="dd" style="left:110.5px;top:38px;border-left-width:3px;border-right-width:3px;border-top:3.500px solid #222"></i>
<div class="abs" style="left:0;top:51px;width:399px;height:22px;background:#efefef;border-top:1px solid #fff"></div><i class="abs" style="left:0;top:52px;width:399px;height:1px;background:#cfcfcf"></i>
<svg class="ic" style="left:2px;top:55px" width="16" height="16" viewBox="0 0 16 16" ><path d="M1.500 13.500v-10.500h4.200l1.200 1.600h6.100v2.400" fill="#e9cd90" stroke="#a86a2a" stroke-width="1" stroke-linejoin="round"/><path d="M1.500 13.500 L4.200 7.500 h11.300 L12.800 13.500Z" fill="#f6e3b0" stroke="#a86a2a" stroke-width="1" stroke-linejoin="round"/></svg>
<span class="t" style="left:21px;top:55px;font-size:15px;letter-spacing:-0.160px">RobMoSys System Component Assembly and Confi...</span>
<svg class="ic" style="left:385px;top:58px" width="11" height="9" viewBox="0 0 11 9"><path d="M4 1 L0.800 4.500 L4 8 L6 5.800 M7 1 L10.200 4.500 L7 8 L5 5.800 M4 1 L6 3.200 M7 1 L5 3.200" fill="none" stroke="#444" stroke-width=".9"/></svg>
<svg class="ic" style="left:16px;top:78px" width="16" height="16" viewBox="0 0 16 16" ><defs><linearGradient id="gci" x1="0" y1="0" x2="0" y2="1"><stop offset="0" stop-color="#ffffff"/><stop offset="1" stop-color="#d8e6f8"/></linearGradient></defs><rect x="1.600" y="1.600" width="11.800" height="12" fill="url(#gci)" stroke="#d0a860" stroke-width="1.100"/><path d="M1.100 13.600h12.900V1.600" fill="none" stroke="#8a4a2a" stroke-width="1.100"/><rect x="4.200" y="4" width="6.800" height="1.700" fill="#808080"/></svg>
<span class="t" style="left:35px;top:79px;font-size:15px">Component Instance</span>
<i class="abs" style="left:3px;top:101px;width:392px;height:1px;background:#9a9a9a"></i>
<svg class="ic" style="left:16.5px;top:107px" width="15" height="15" viewBox="0 0 16 16" ><path d="M2.500 13.500 L13.500 2.500" stroke="#2f5fb3" stroke-width="1.300"/></svg>
<span class="t" style="left:35px;top:108px;font-size:15px">connects</span>
</div>
<div class="abs" style="left:0px;top:626px;width:1215px;height:24px;background:#ececec;border-top:1px solid #c6c6c6"></div>
<div class="abs" style="left:815px;top:626px;width:400px;height:1px;background:#ababab"></div>
<div class="abs" style="left:818px;top:647px;width:188px;height:3px;background:#fff"></div>
<div class="abs" style="left:817px;top:626px;width:190px;height:21.500px;background:#fff;border:1px solid #a6a6a6;border-top:none;border-radius:0 0 5px 5px"></div>
<svg class="ic" style="left:6px;top:628px" width="16" height="16" viewBox="0 0 16 16" ><circle cx="8" cy="7.800" r="7.300" fill="#eef0f2" stroke="#6a6a6a" stroke-width="1"/><circle cx="8.600" cy="4.500" r="2.700" fill="#4d96d8"/><circle cx="5" cy="9.600" r="2.500" fill="#c8843a"/><circle cx="5" cy="9.600" r="1" fill="#e8c070"/><circle cx="10.600" cy="10.200" r="2.600" fill="#3fa04a"/><circle cx="10.600" cy="10.200" r="1" fill="#9fdc9f"/></svg>
<span class="t" style="left:26.5px;top:629px;font-size:15px;letter-spacing:0.1px;color:#424246">Welcome</span>
<svg class="ic" style="left:98px;top:628px" width="16" height="16" viewBox="0 0 16 16" ><rect x="0.500" y="0.500" width="12" height="14" fill="#fff" stroke="#111" stroke-width="1.300"/><path d="M0.500 3.500h12" stroke="#111" stroke-width="1.200"/><rect x="2.900" y="5.800" width="4.300" height="6.200" fill="#fff" stroke="#111" stroke-width="1.200"/><path d="M2.900 7h4.300" stroke="#111" stroke-width="1"/><path d="M7.800 9.400h2.600" stroke="#111" stroke-width="1.100"/><rect x="11" y="7.700" width="3.200" height="3.400" fill="#fff" stroke="#111" stroke-width="1.200"/></svg>
<span class="t" style="left:117.5px;top:629px;font-size:15px;letter-spacing:0.16px;color:#424246">data (map)</span>
<svg class="ic" style="left:200px;top:628px" width="16" height="16" viewBox="0 0 16 16" ><rect x="0.500" y="0.500" width="12" height="14" fill="#fff" stroke="#111" stroke-width="1.300"/><path d="M0.500 3.500h12" stroke="#111" stroke-width="1.200"/><rect x="2.900" y="5.800" width="4.300" height="6.200" fill="#fff" stroke="#111" stroke-width="1.200"/><path d="M2.900 7h4.300" stroke="#111" stroke-width="1"/><path d="M7.800 9.400h2.600" stroke="#111" stroke-width="1.100"/><rect x="11" y="7.700" width="3.200" height="3.400" fill="#fff" stroke="#111" stroke-width="1.200"/></svg>
<span class="t" style="left:219.5px;top:629px;font-size:15px;letter-spacing:0.15px;color:#424246">servicedef (map)</span>
<svg class="ic" style="left:341px;top:628px" width="16" height="16" viewBox="0 0 16 16" ><rect x="0.500" y="0.500" width="12" height="14" fill="#fff" stroke="#111" stroke-width="1.300"/><path d="M0.500 3.500h12" stroke="#111" stroke-width="1.200"/><rect x="2.900" y="5.800" width="4.300" height="6.200" fill="#fff" stroke="#111" stroke-width="1.200"/><path d="M2.900 7h4.300" stroke="#111" stroke-width="1"/><path d="M7.800 9.400h2.600" stroke="#111" stroke-width="1.100"/><rect x="11" y="7.700" width="3.200" height="3.400" fill="#fff" stroke="#111" stroke-width="1.200"/></svg>
<span class="t" style="left:360.3px;top:629px;font-size:15px;letter-spacing:0.08px;color:#424246">servicedef (plan)</span>
<svg class="ic" style="left:480px;top:628px" width="16" height="16" viewBox="0 0 16 16" ><rect x="1.500" y="2.300" width="5.500" height="6.300" rx="1" fill="#fff" stroke="#111" stroke-width="1.300"/><rect x="9.900" y="8.300" width="5.700" height="5.700" rx="1" fill="#fff" stroke="#111" stroke-width="1.300"/><path d="M0.600 4h1.200M6.800 4h1.200M9 10h1.200M15.400 10h1.200" stroke="#111" stroke-width="1.200"/></svg>
<span class="t" style="left:500.5px;top:629px;font-size:15px;letter-spacing:0.3px;color:#424246">componentdef (map)</span>
<svg class="ic" style="left:652px;top:628px" width="16" height="16" viewBox="0 0 16 16" ><rect x="1.500" y="2.300" width="5.500" height="6.300" rx="1" fill="#fff" stroke="#111" stroke-width="1.300"/><rect x="9.900" y="8.300" width="5.700" height="5.700" rx="1" fill="#fff" stroke="#111" stroke-width="1.300"/><path d="M0.600 4h1.200M6.800 4h1.200M9 10h1.200M15.400 10h1.200" stroke="#111" stroke-width="1.200"/></svg>
<span class="t" style="left:671.5px;top:629px;font-size:15px;letter-spacing:0.2px;color:#424246">componentdef (plan)</span>
<svg class="ic" style="left:822px;top:628px" width="16" height="16" viewBox="0 0 16 16" ><rect x="0.500" y="0.500" width="12" height="14" fill="#fff" stroke="#111" stroke-width="1.300"/><path d="M0.500 3.500h12" stroke="#111" stroke-width="1.200"/><rect x="2.900" y="5.800" width="4.300" height="6.200" fill="#fff" stroke="#111" stroke-width="1.200"/><path d="M2.900 7h4.300" stroke="#111" stroke-width="1"/><path d="M7.800 9.400h2.600" stroke="#111" stroke-width="1.100"/><rect x="11" y="7.700" width="3.200" height="3.400" fill="#fff" stroke="#111" stroke-width="1.200"/></svg>
<span class="t" style="left:841.3px;top:629px;font-size:15px;letter-spacing:0.2px;color:#111">componentassembly</span>
<i class="abs" style="left:93px;top:628px;width:1px;height:21px;background:#c2c2c2;margin-top:-1px"></i>
<i class="abs" style="left:196px;top:628px;width:1px;height:21px;background:#c2c2c2;margin-top:-1px"></i>
<i class="abs" style="left:337px;top:628px;width:1px;height:21px;background:#c2c2c2;margin-top:-1px"></i>
<i class="abs" style="left:477px;top:628px;width:1px;height:21px;background:#c2c2c2;margin-top:-1px"></i>
<i class="abs" style="left:648px;top:628px;width:1px;height:21px;background:#c2c2c2;margin-top:-1px"></i>
<svg class="ic" style="left:988px;top:630px" width="12" height="12" viewBox="0 0 12 12"><path d="M1.500 1.500 L3.500 1.500 L6 4 L8.500 1.500 L10.500 1.500 L10.500 3.500 L8 6 L10.500 8.500 L10.500 10.500 L8.500 10.500 L6 8 L3.500 10.500 L1.500 10.500 L1.500 8.500 L4 6 L1.500 3.500Z" fill="#fff" stroke="#111" stroke-width="1.250"/></svg>
</div>
<i class="hd" style="left:974px;top:722.5px"></i>
</body></html>
